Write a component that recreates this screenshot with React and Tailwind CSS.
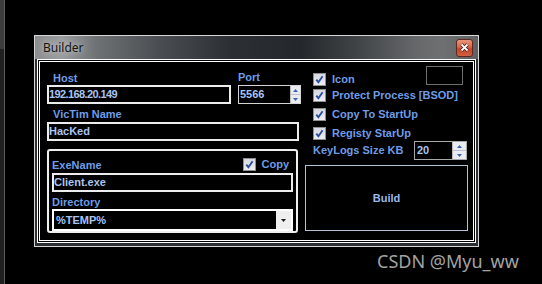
import React from 'react';

const font = { fontFamily: '"Liberation Sans", Arial, sans-serif' };

const Check = () => (
  <span className="w-[13px] h-[13px] border border-[#8e8e8e] bg-[linear-gradient(180deg,#d6d9e2,#eceef3)] flex items-center justify-center shrink-0">
    <svg width="9" height="9" viewBox="0 0 9 9">
      <path d="M1.3 4.6 L3.4 7.2 L7.6 1.2" fill="none" stroke="#2c4c9c" strokeWidth="1.9" />
    </svg>
  </span>
);

const Spin = ({ w }) => (
  <div className={`flex flex-col h-full border-l border-[#b8b8b8] ${w}`}>
    <div className="flex-1 bg-[#e8ebf2] border-b border-[#b9bfcf] flex items-center justify-center">
      <svg width="5" height="3" viewBox="0 0 5 3"><path d="M0 3 L2.5 0 L5 3 Z" fill="#3f5fae" /></svg>
    </div>
    <div className="flex-1 bg-[#e8ebf2] flex items-center justify-center">
      <svg width="5" height="3" viewBox="0 0 5 3"><path d="M0 0 L5 0 L2.5 3 Z" fill="#3f5fae" /></svg>
    </div>
  </div>
);

const Label = ({ children, className = '' }) => (
  <div className={`text-[11px] font-bold leading-[13px] text-[#6f9ce6] whitespace-nowrap ${className}`}>{children}</div>
);

const CheckRow = ({ text, className = '' }) => (
  <div className={`flex items-center gap-[6px] pl-[8px] ${className}`}>
    <Check />
    <span className="text-[11px] font-bold leading-[13px] text-[#6f9ce6] whitespace-nowrap">{text}</span>
  </div>
);

const Box = ({ children, className = '' }) => (
  <div className={`h-[19px] border-2 border-[#ececec] bg-black text-[11px] font-bold leading-[15px] text-[#a9c4f2] whitespace-nowrap overflow-hidden ${className}`}>
    {children}
  </div>
);

export default function App() {
  return (
    <div className="w-[542px] h-[284px] bg-black relative overflow-hidden flex" style={font}>
      <div className="w-[4px] h-full flex flex-col">
        <div className="h-[49px] bg-[#3c3c3c]" />
        <div className="flex-1 bg-[#1f2022]" />
      </div>
      <div className="w-px h-full bg-[#5c5c5c]" />

      {/* window */}
      <div className="absolute left-[34px] top-[35px] w-[445px] h-[212px] border border-[#d6d6d6] bg-[#2c3035] flex flex-col">
        <div className="h-[23px] flex items-center bg-[linear-gradient(90deg,#8a8c8e_0%,#9a9c9e_6%,#6e7174_14%,#4a4e52_28%,#2c3034_44%,#24272b_60%,#3e4245_72%,#66686a_86%,#6e7072_92%,#5e6062_100%)]">
          <span
            className="pl-[8px] text-[12px] leading-[14px] text-[#141414]"
            style={{ fontFamily: '"Noto Sans", "Open Sans", sans-serif', textShadow: '0 0 6px rgba(230,230,230,0.95)' }}
          >
            Builder
          </span>
          <div className="ml-auto mr-[5px] w-[17px] h-[18px] rounded-[3px] border border-[#5b2a1e] bg-[linear-gradient(180deg,#e8957c_0%,#d8664a_45%,#c2432a_55%,#d2603f_100%)] flex items-center justify-center">
            <svg width="9" height="9" viewBox="0 0 9 9">
              <path d="M1.5 1.5 L7.5 7.5 M7.5 1.5 L1.5 7.5" stroke="#3a1a14" strokeWidth="3.2" />
              <path d="M1.5 1.5 L7.5 7.5 M7.5 1.5 L1.5 7.5" stroke="#ffffff" strokeWidth="1.8" />
            </svg>
          </div>
        </div>

        <div className="mx-[2px] mb-[3px] flex-1 border-[3px] border-double border-white bg-black flex pl-[7px] pr-[4px]">
          {/* left column */}
          <div className="w-[254px] flex flex-col">
            <div className="flex gap-[7px]">
              <div className="w-[184px] flex flex-col">
                <Label className="h-[23px] pt-[10px] pl-[6px]">Host</Label>
                <Box className="tracking-[-0.6px]">192.168.20.149</Box>
              </div>
              <div className="w-[63px] flex flex-col">
                <Label className="h-[23px] pt-[9px]">Port</Label>
                <div className="h-[19px] border border-[#d4d4d4] flex">
                  <div className="flex-1 text-[11px] font-bold leading-[15px] text-[#a9c4f2] pl-[1px] pt-[1px]">5566</div>
                  <Spin w="w-[10px]" />
                </div>
              </div>
            </div>
            <Label className="h-[18px] pt-[4px] pl-[6px]">VicTim Name</Label>
            <Box className="w-[252px]">HacKed</Box>

            <div className="mt-[8px] w-[251px] h-[84px] border-2 border-[#efefef] rounded-[3px] flex flex-col pt-[7px] pl-[3px]">
              <div className="h-[15px] flex items-start justify-between">
                <Label className="pt-[1px]">ExeName</Label>
                <div className="flex items-start gap-[6px] mr-[7px]">
                  <Check />
                  <span className="text-[11px] font-bold leading-[13px] text-[#6f9ce6]">Copy</span>
                </div>
              </div>
              <Box className="w-[241px]">Client.exe</Box>
              <Label className="h-[17px] pt-[4px]">Directory</Label>
              <div className="w-[241px] h-[22px] border-2 border-white flex">
                <div className="flex-1 pl-[2px] text-[11px] font-bold leading-[18px] text-[#a9c4f2]">%TEMP%</div>
                <div className="w-[15px] bg-[#efefef] flex items-center justify-center">
                  <svg width="5" height="3" viewBox="0 0 5 3"><path d="M0 0 L5 0 L2.5 3 Z" fill="#1a1a1a" /></svg>
                </div>
              </div>
            </div>
          </div>

          {/* right column */}
          <div className="ml-[4px] w-[163px] flex flex-col">
            <div className="h-[23px] flex items-start">
              <CheckRow text="Icon" className="mt-[11px]" />
              <div className="ml-auto mr-[5px] mt-[4px] w-[37px] h-[19px] border border-[#6e6e6e]" />
            </div>
            <CheckRow text="Protect Process [BSOD]" className="mt-[4px]" />
            <CheckRow text="Copy To StartUp" className="mt-[6px]" />
            <CheckRow text="Registy StarUp" className="mt-[6px]" />
            <div className="mt-[1px] flex items-center">
              <Label className="pl-[8px]">KeyLogs Size KB</Label>
              <div className="ml-auto mr-[1px] w-[53px] h-[19px] border border-[#a8a8a8] flex">
                <div className="flex-1 text-[11px] font-bold leading-[15px] text-[#a9c4f2] pl-[2px] pt-[1px]">20</div>
                <Spin w="w-[14px]" />
              </div>
            </div>
            <div className="mt-[5px] h-[66px] border border-[#b4c2d8] flex items-center justify-center text-[11px] font-bold text-[#9ab8ee]">
              Build
            </div>
          </div>
        </div>
      </div>

      <div
        className="absolute left-[377px] top-[251px] text-[18px] leading-[20px] text-[#a3a3a3] whitespace-nowrap"
        style={{ fontFamily: '"Noto Sans", "Open Sans", sans-serif' }}
      >
        CSDN @Myu_ww
      </div>
    </div>
  );
}
